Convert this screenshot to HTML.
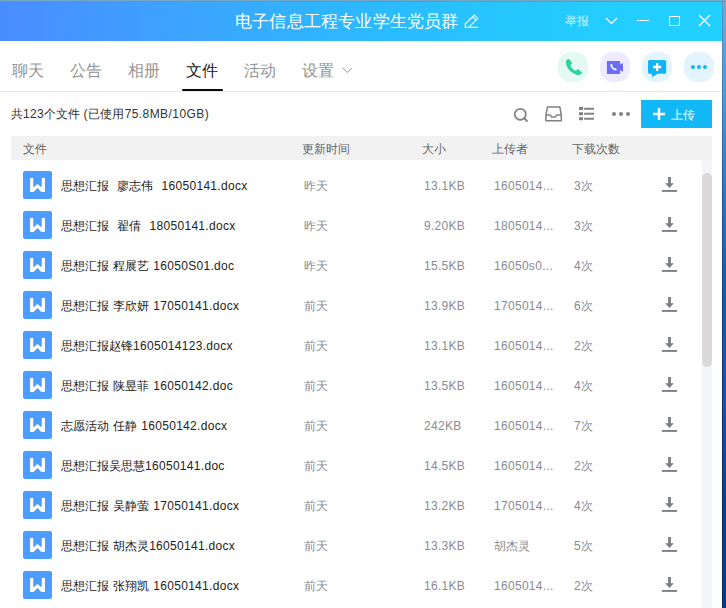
<!DOCTYPE html>
<html><head><meta charset="utf-8">
<style>
*{margin:0;padding:0;box-sizing:border-box}
html,body{width:726px;height:608px;overflow:hidden}
body{position:relative;font-family:"Liberation Sans",sans-serif;background:linear-gradient(180deg,#72a8c8 0px,#6aa6d6 20px,#5fa0d5 45px,#5096d0 100px,#3270b8 200px,#1f56a0 300px,#1d52a0 400px,#123f80 500px,#0c3a7a 608px)}
.topstrip{position:absolute;left:0;top:0;width:726px;height:2px;background:linear-gradient(180deg,#72a8c8 0,#72a8c8 1px,#6298b2 1px)}
.edge{position:absolute;left:722px;top:2px;width:1px;height:606px;background:linear-gradient(180deg,#5a98c8 0px,#3a78b5 100px,#1a52a0 200px,#0d3f8c 300px,#082f76 400px,#022a6a 500px,#022a6a 608px)}
.win{position:absolute;left:0;top:2px;width:722px;height:606px;background:linear-gradient(180deg,transparent 0,transparent 20px,#fff 20px);border-top-right-radius:3px}
.tb{position:absolute;left:0;top:0;width:722px;height:39px;border-top-right-radius:3px;background:linear-gradient(90deg,#4a8cff 0px,#3fa0ff 155px,#2eb6ff 335px,#26c6ff 505px,#22d0ff 660px)}
.abs{position:absolute;white-space:pre}
.title{color:#fff;font-size:17px;letter-spacing:0.2px;line-height:20px}
.tab{font-size:16px;color:#959595;line-height:20px}
.sq{position:absolute;width:30px;height:30px;border-radius:12.5px}
.hdr{position:absolute;left:11px;top:134px;width:701px;height:24px;background:#f2f2f2}
.h{font-size:12px;color:#666;line-height:14px}
.row{position:absolute;left:0;width:700px;height:40px}
.ic{position:absolute;left:23px;top:9px;width:29px;height:28px;background:#4d9cff;border-radius:2px}
.nm{position:absolute;left:61px;top:17px;font-size:12px;color:#222;line-height:14px;white-space:pre}
.c{position:absolute;top:17px;font-size:12px;color:#888b92;line-height:14px;white-space:pre}
.dl{position:absolute;left:662px;top:15px}
.l{letter-spacing:0.3px}
.nm .l{word-spacing:0.5px}
</style></head><body>
<div class="topstrip"></div>
<div class="edge"></div>
<div class="win">
  <div class="tb">
    <div class="abs title" style="left:235px;top:10px">电子信息工程专业学生党员群</div>
    <svg class="abs" style="left:463px;top:12px" width="17" height="16" viewBox="0 0 17 16"><path d="M2.3 13.3 V9.8 L11.4 1 L14.7 4.4 L5.9 13.3 Z M2.3 13.3 H15 M9.6 2.8 L13 6.2" fill="none" stroke="#fff" stroke-width="1.1" stroke-linejoin="miter"/></svg>
    <div class="abs" style="left:565px;top:12px;font-size:12px;line-height:14px;color:#d9f1ff">举报</div>
    <svg class="abs" style="left:605px;top:15px" width="13" height="8" viewBox="0 0 13 8"><path d="M1 1 L6.5 6.5 L12 1" fill="none" stroke="#fff" stroke-width="1.2"/></svg>
    <div class="abs" style="left:637px;top:18px;width:12px;height:1.3px;background:#fff"></div>
    <div class="abs" style="left:669px;top:14px;width:11px;height:10px;border:1.3px solid #fff"></div>
    <svg class="abs" style="left:698px;top:12px" width="13" height="13" viewBox="0 0 13 13"><path d="M1 1 L12 12 M12 1 L1 12" fill="none" stroke="#fff" stroke-width="1.2"/></svg>
  </div>
  <!-- tabs -->
  <div class="abs tab" style="left:12px;top:59px">聊天</div>
  <div class="abs tab" style="left:70px;top:59px">公告</div>
  <div class="abs tab" style="left:128px;top:59px">相册</div>
  <div class="abs tab" style="left:186px;top:59px;color:#222">文件</div>
  <div class="abs" style="left:182px;top:87px;width:41px;height:2px;border-radius:1px;background:#0a0a0a"></div>
  <div class="abs tab" style="left:244px;top:59px">活动</div>
  <div class="abs tab" style="left:302px;top:59px">设置</div>
  <svg class="abs" style="left:341.5px;top:65px" width="11" height="7" viewBox="0 0 11 7"><path d="M0.7 0.9 L5.3 5.5 L9.9 0.9" fill="none" stroke="#909090" stroke-width="1"/></svg>
  <div class="abs" style="left:0;top:89px;width:722px;height:1px;background:#e6e6e6"></div>
  <!-- action buttons -->
  <div class="sq" style="left:558px;top:50px;background:#e4f9f2"></div>
  <svg class="abs" style="left:565px;top:56px" width="18" height="18" viewBox="0 0 18 18"><path d="M3.3 1.1 C2 1.1 1 2.3 1 4.6 C1 9.5 5.5 15 12.2 16.9 C13.8 17.3 15.9 16.6 16.9 15.2 C17.2 14.7 17 14.2 16.6 13.9 L13.6 11.5 C13.1 11.2 12.5 11.3 12.1 11.7 L10.9 12.9 C8.5 11.8 6.4 9.8 5.3 7.4 L6.6 6.1 C7 5.7 7.1 5.1 6.8 4.6 L5 1.9 C4.6 1.4 4 1.1 3.3 1.1 Z" fill="#2dd2a2"/></svg>
  <div class="sq" style="left:600px;top:50px;background:#eeebfe"></div>
  <svg class="abs" style="left:606px;top:58px" width="18" height="16" viewBox="0 0 18 16"><path d="M0.9 1 H14.1 V4.6 L17 2.9 V11.8 L14.1 10.2 V14 H0.9 Z" fill="#6c6cf6"/><g transform="translate(3.9,3.2) scale(0.43)"><path d="M2.6 1.3 C1.6 1.6 1.2 2.8 1.2 4.8 C1.3 9 5 14 10.5 16.2 C12.6 17 15.2 16.6 16.6 14.6 L13.6 11.6 C13 11.3 12.4 11.6 11.2 12.6 C8.6 11.6 6.6 9.4 5.6 7.2 C6.6 6.4 7.2 5.8 6.8 5 Z" fill="#fff"/></g></svg>
  <div class="sq" style="left:642px;top:50px;background:#e3f4fe"></div>
  <svg class="abs" style="left:648px;top:58px" width="19" height="18" viewBox="0 0 19 18"><path d="M1.5 0 H16.7 Q18.2 0 18.2 1.5 V12.3 Q18.2 13.8 16.7 13.8 H9.6 L4.4 16.9 L3.6 13.8 H1.5 Q0 13.8 0 12.3 V1.5 Q0 0 1.5 0 Z" fill="#12b4f4"/><path d="M9.1 3 V11 M5.05 7 H13.15" stroke="#fff" stroke-width="2.3"/></svg>
  <div class="sq" style="left:684px;top:50px;background:#e3f4fe"></div>
  <div class="abs" style="left:691px;top:63px;width:4px;height:4px;border-radius:2px;background:#12b7f5"></div>
  <div class="abs" style="left:697px;top:63px;width:4px;height:4px;border-radius:2px;background:#12b7f5"></div>
  <div class="abs" style="left:703px;top:63px;width:4px;height:4px;border-radius:2px;background:#12b7f5"></div>
  <!-- toolbar -->
  <div class="abs" style="left:11px;top:105px;font-size:12px;line-height:14px;color:#333">共<span class="l">123</span>个文件<span class="l"> (</span>已使用<span class="l" style="letter-spacing:0.42px;margin-left:0.8px">75.8MB/10GB)</span></div>
  <svg class="abs" style="left:512px;top:104px" width="18" height="18" viewBox="0 0 18 18"><circle cx="8.3" cy="8.3" r="5.5" fill="none" stroke="#808086" stroke-width="1.7"/><path d="M12.6 12.6 L15 15" stroke="#808086" stroke-width="1.8" stroke-linecap="round"/></svg>
  <svg class="abs" style="left:544px;top:103px" width="19" height="18" viewBox="0 0 19 18"><path d="M1.9 10 L3.5 2.1 H15.9 L17.3 10 V15.7 H1.9 Z" fill="none" stroke="#808086" stroke-width="1.5" stroke-linejoin="round"/><path d="M1.9 10 H6.1 L7.8 12.1 H11.1 L12.8 10 H17.3" fill="none" stroke="#808086" stroke-width="1.5" stroke-linejoin="round"/></svg>
  <svg class="abs" style="left:578px;top:104px" width="17" height="16" viewBox="0 0 17 16"><path d="M1 1.1 H5 V4.1 H1 Z M1 6.2 H5 V9.2 H1 Z M1 11.2 H5 V14.2 H1 Z" fill="#808086"/><path d="M6.1 2.7 H16 M6.1 7.8 H16 M6.1 12.8 H16" stroke="#808086" stroke-width="1.9"/></svg>
  <div class="abs" style="left:612px;top:109.5px;width:4px;height:4px;border-radius:2px;background:#808086"></div>
  <div class="abs" style="left:619px;top:109.5px;width:4px;height:4px;border-radius:2px;background:#808086"></div>
  <div class="abs" style="left:626px;top:109.5px;width:4px;height:4px;border-radius:2px;background:#808086"></div>
  <div class="abs" style="left:641px;top:98px;width:71px;height:28px;background:#12b7f5"></div>
  <svg class="abs" style="left:653px;top:106px" width="12" height="12" viewBox="0 0 12 12"><path d="M6 0 V12 M0 6 H12" stroke="#fff" stroke-width="2.4"/></svg>
  <div class="abs" style="left:671px;top:106px;font-size:12px;line-height:14px;color:#fff">上传</div>
  <!-- header -->
  <div class="hdr"></div>
  <div class="abs h" style="left:23px;top:140px">文件</div>
  <div class="abs h" style="left:302px;top:140px">更新时间</div>
  <div class="abs h" style="left:422px;top:140px">大小</div>
  <div class="abs h" style="left:492px;top:140px">上传者</div>
  <div class="abs h" style="left:572px;top:140px">下载次数</div>
  <!-- scrollbar -->
  <div class="abs" style="left:702px;top:158px;width:10px;height:450px;background:#f4f5f7"></div>
  <div class="abs" style="left:702px;top:171px;width:10px;height:194px;border-radius:5px;background:#dcd9da"></div>
  <!--ROWS--><div class="row" style="top:160px"><div class="ic"><svg class="abs" style="left:0;top:0" width="29" height="28" viewBox="0 0 29 28"><path d="M7.1 7 H10.25 V16.5 L14.5 12.9 L18.8 16.5 V7 H21.9 V20.9 H18.3 L14.5 17 L10.6 20.9 H7.1 Z" fill="#fff"/></svg></div><div class="nm">思想汇报<span class="l">  </span>廖志伟<span class="l">  16050141.docx</span></div><div class="c" style="left:304px">昨天</div><div class="c" style="left:424px"><span class="l">13.1KB</span></div><div class="c" style="left:494px"><span class="l">1605014...</span></div><div class="c" style="left:574px"><span class="l">3</span>次</div><svg class="dl" width="16" height="16" viewBox="0 0 16 16"><path d="M6.1 0 H8.9 V6.3 H11.8 L7.5 11 L3.2 6.3 H6.1 Z" fill="#7d8088"/><rect x="0" y="13" width="15" height="1.9" fill="#7d8088"/></svg></div>
<div class="row" style="top:200px"><div class="ic"><svg class="abs" style="left:0;top:0" width="29" height="28" viewBox="0 0 29 28"><path d="M7.1 7 H10.25 V16.5 L14.5 12.9 L18.8 16.5 V7 H21.9 V20.9 H18.3 L14.5 17 L10.6 20.9 H7.1 Z" fill="#fff"/></svg></div><div class="nm">思想汇报<span class="l">  </span>翟倩<span class="l">  18050141.docx</span></div><div class="c" style="left:304px">昨天</div><div class="c" style="left:424px"><span class="l">9.20KB</span></div><div class="c" style="left:494px"><span class="l">1805014...</span></div><div class="c" style="left:574px"><span class="l">3</span>次</div><svg class="dl" width="16" height="16" viewBox="0 0 16 16"><path d="M6.1 0 H8.9 V6.3 H11.8 L7.5 11 L3.2 6.3 H6.1 Z" fill="#7d8088"/><rect x="0" y="13" width="15" height="1.9" fill="#7d8088"/></svg></div>
<div class="row" style="top:240px"><div class="ic"><svg class="abs" style="left:0;top:0" width="29" height="28" viewBox="0 0 29 28"><path d="M7.1 7 H10.25 V16.5 L14.5 12.9 L18.8 16.5 V7 H21.9 V20.9 H18.3 L14.5 17 L10.6 20.9 H7.1 Z" fill="#fff"/></svg></div><div class="nm">思想汇报<span class="l"> </span>程展艺<span class="l"> 16050S01.doc</span></div><div class="c" style="left:304px">昨天</div><div class="c" style="left:424px"><span class="l">15.5KB</span></div><div class="c" style="left:494px"><span class="l">16050s0...</span></div><div class="c" style="left:574px"><span class="l">4</span>次</div><svg class="dl" width="16" height="16" viewBox="0 0 16 16"><path d="M6.1 0 H8.9 V6.3 H11.8 L7.5 11 L3.2 6.3 H6.1 Z" fill="#7d8088"/><rect x="0" y="13" width="15" height="1.9" fill="#7d8088"/></svg></div>
<div class="row" style="top:280px"><div class="ic"><svg class="abs" style="left:0;top:0" width="29" height="28" viewBox="0 0 29 28"><path d="M7.1 7 H10.25 V16.5 L14.5 12.9 L18.8 16.5 V7 H21.9 V20.9 H18.3 L14.5 17 L10.6 20.9 H7.1 Z" fill="#fff"/></svg></div><div class="nm">思想汇报<span class="l"> </span>李欣妍<span class="l"> 17050141.docx</span></div><div class="c" style="left:304px">前天</div><div class="c" style="left:424px"><span class="l">13.9KB</span></div><div class="c" style="left:494px"><span class="l">1705014...</span></div><div class="c" style="left:574px"><span class="l">6</span>次</div><svg class="dl" width="16" height="16" viewBox="0 0 16 16"><path d="M6.1 0 H8.9 V6.3 H11.8 L7.5 11 L3.2 6.3 H6.1 Z" fill="#7d8088"/><rect x="0" y="13" width="15" height="1.9" fill="#7d8088"/></svg></div>
<div class="row" style="top:320px"><div class="ic"><svg class="abs" style="left:0;top:0" width="29" height="28" viewBox="0 0 29 28"><path d="M7.1 7 H10.25 V16.5 L14.5 12.9 L18.8 16.5 V7 H21.9 V20.9 H18.3 L14.5 17 L10.6 20.9 H7.1 Z" fill="#fff"/></svg></div><div class="nm">思想汇报赵锋<span class="l">1605014123.docx</span></div><div class="c" style="left:304px">前天</div><div class="c" style="left:424px"><span class="l">13.1KB</span></div><div class="c" style="left:494px"><span class="l">1605014...</span></div><div class="c" style="left:574px"><span class="l">2</span>次</div><svg class="dl" width="16" height="16" viewBox="0 0 16 16"><path d="M6.1 0 H8.9 V6.3 H11.8 L7.5 11 L3.2 6.3 H6.1 Z" fill="#7d8088"/><rect x="0" y="13" width="15" height="1.9" fill="#7d8088"/></svg></div>
<div class="row" style="top:360px"><div class="ic"><svg class="abs" style="left:0;top:0" width="29" height="28" viewBox="0 0 29 28"><path d="M7.1 7 H10.25 V16.5 L14.5 12.9 L18.8 16.5 V7 H21.9 V20.9 H18.3 L14.5 17 L10.6 20.9 H7.1 Z" fill="#fff"/></svg></div><div class="nm">思想汇报<span class="l"> </span>陕昱菲<span class="l"> 16050142.doc</span></div><div class="c" style="left:304px">前天</div><div class="c" style="left:424px"><span class="l">13.5KB</span></div><div class="c" style="left:494px"><span class="l">1605014...</span></div><div class="c" style="left:574px"><span class="l">4</span>次</div><svg class="dl" width="16" height="16" viewBox="0 0 16 16"><path d="M6.1 0 H8.9 V6.3 H11.8 L7.5 11 L3.2 6.3 H6.1 Z" fill="#7d8088"/><rect x="0" y="13" width="15" height="1.9" fill="#7d8088"/></svg></div>
<div class="row" style="top:400px"><div class="ic"><svg class="abs" style="left:0;top:0" width="29" height="28" viewBox="0 0 29 28"><path d="M7.1 7 H10.25 V16.5 L14.5 12.9 L18.8 16.5 V7 H21.9 V20.9 H18.3 L14.5 17 L10.6 20.9 H7.1 Z" fill="#fff"/></svg></div><div class="nm">志愿活动<span class="l"> </span>任静<span class="l"> 16050142.docx</span></div><div class="c" style="left:304px">前天</div><div class="c" style="left:424px"><span class="l">242KB</span></div><div class="c" style="left:494px"><span class="l">1605014...</span></div><div class="c" style="left:574px"><span class="l">7</span>次</div><svg class="dl" width="16" height="16" viewBox="0 0 16 16"><path d="M6.1 0 H8.9 V6.3 H11.8 L7.5 11 L3.2 6.3 H6.1 Z" fill="#7d8088"/><rect x="0" y="13" width="15" height="1.9" fill="#7d8088"/></svg></div>
<div class="row" style="top:440px"><div class="ic"><svg class="abs" style="left:0;top:0" width="29" height="28" viewBox="0 0 29 28"><path d="M7.1 7 H10.25 V16.5 L14.5 12.9 L18.8 16.5 V7 H21.9 V20.9 H18.3 L14.5 17 L10.6 20.9 H7.1 Z" fill="#fff"/></svg></div><div class="nm">思想汇报吴思慧<span class="l">16050141.doc</span></div><div class="c" style="left:304px">前天</div><div class="c" style="left:424px"><span class="l">14.5KB</span></div><div class="c" style="left:494px"><span class="l">1605014...</span></div><div class="c" style="left:574px"><span class="l">2</span>次</div><svg class="dl" width="16" height="16" viewBox="0 0 16 16"><path d="M6.1 0 H8.9 V6.3 H11.8 L7.5 11 L3.2 6.3 H6.1 Z" fill="#7d8088"/><rect x="0" y="13" width="15" height="1.9" fill="#7d8088"/></svg></div>
<div class="row" style="top:480px"><div class="ic"><svg class="abs" style="left:0;top:0" width="29" height="28" viewBox="0 0 29 28"><path d="M7.1 7 H10.25 V16.5 L14.5 12.9 L18.8 16.5 V7 H21.9 V20.9 H18.3 L14.5 17 L10.6 20.9 H7.1 Z" fill="#fff"/></svg></div><div class="nm">思想汇报<span class="l"> </span>吴静萤<span class="l"> 17050141.docx</span></div><div class="c" style="left:304px">前天</div><div class="c" style="left:424px"><span class="l">13.2KB</span></div><div class="c" style="left:494px"><span class="l">1705014...</span></div><div class="c" style="left:574px"><span class="l">4</span>次</div><svg class="dl" width="16" height="16" viewBox="0 0 16 16"><path d="M6.1 0 H8.9 V6.3 H11.8 L7.5 11 L3.2 6.3 H6.1 Z" fill="#7d8088"/><rect x="0" y="13" width="15" height="1.9" fill="#7d8088"/></svg></div>
<div class="row" style="top:520px"><div class="ic"><svg class="abs" style="left:0;top:0" width="29" height="28" viewBox="0 0 29 28"><path d="M7.1 7 H10.25 V16.5 L14.5 12.9 L18.8 16.5 V7 H21.9 V20.9 H18.3 L14.5 17 L10.6 20.9 H7.1 Z" fill="#fff"/></svg></div><div class="nm">思想汇报<span class="l"> </span>胡杰灵<span class="l">16050141.docx</span></div><div class="c" style="left:304px">前天</div><div class="c" style="left:424px"><span class="l">13.3KB</span></div><div class="c" style="left:494px">胡杰灵</div><div class="c" style="left:574px"><span class="l">5</span>次</div><svg class="dl" width="16" height="16" viewBox="0 0 16 16"><path d="M6.1 0 H8.9 V6.3 H11.8 L7.5 11 L3.2 6.3 H6.1 Z" fill="#7d8088"/><rect x="0" y="13" width="15" height="1.9" fill="#7d8088"/></svg></div>
<div class="row" style="top:560px"><div class="ic"><svg class="abs" style="left:0;top:0" width="29" height="28" viewBox="0 0 29 28"><path d="M7.1 7 H10.25 V16.5 L14.5 12.9 L18.8 16.5 V7 H21.9 V20.9 H18.3 L14.5 17 L10.6 20.9 H7.1 Z" fill="#fff"/></svg></div><div class="nm">思想汇报<span class="l"> </span>张翔凯<span class="l"> 16050141.docx</span></div><div class="c" style="left:304px">前天</div><div class="c" style="left:424px"><span class="l">16.1KB</span></div><div class="c" style="left:494px"><span class="l">1605014...</span></div><div class="c" style="left:574px"><span class="l">2</span>次</div><svg class="dl" width="16" height="16" viewBox="0 0 16 16"><path d="M6.1 0 H8.9 V6.3 H11.8 L7.5 11 L3.2 6.3 H6.1 Z" fill="#7d8088"/><rect x="0" y="13" width="15" height="1.9" fill="#7d8088"/></svg></div><!--/ROWS-->
</div>
</body></html>
